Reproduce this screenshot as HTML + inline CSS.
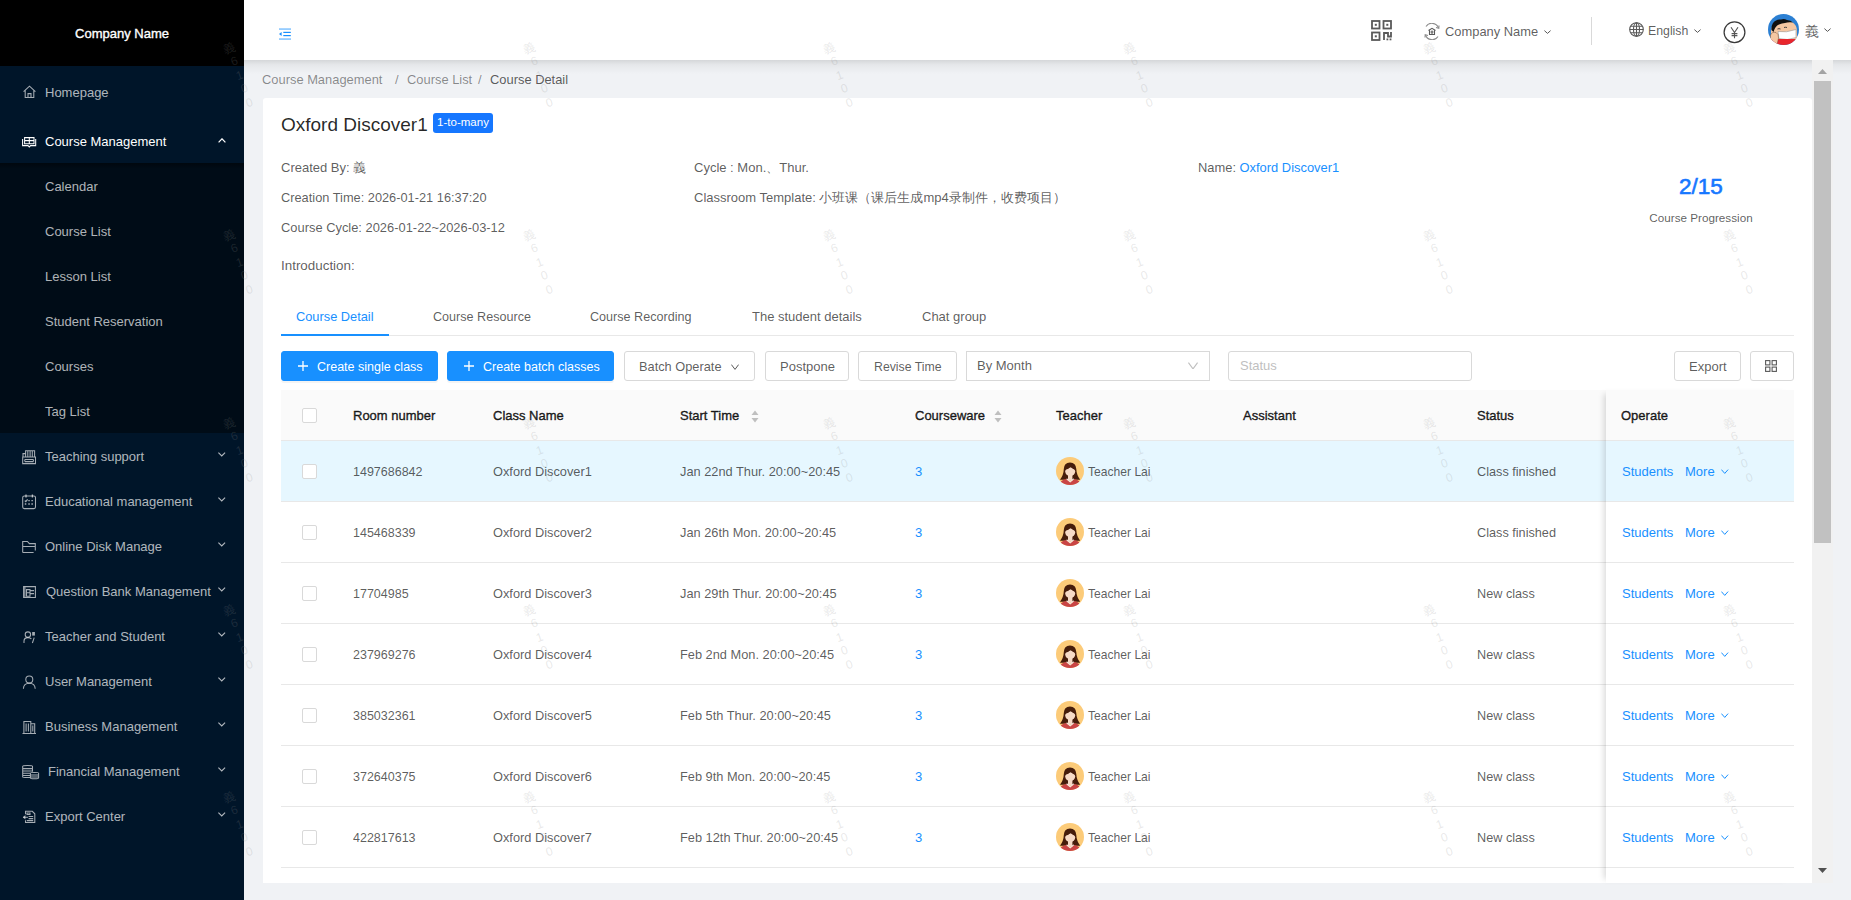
<!DOCTYPE html><html><head><meta charset="utf-8"><style>
*{box-sizing:border-box;margin:0;padding:0}
html,body{width:1851px;height:900px;overflow:hidden;background:#f0f2f5;font-family:"Liberation Sans",sans-serif;font-size:13px;color:rgba(0,0,0,.65)}
.t{position:absolute;white-space:nowrap;line-height:20px;height:20px}
.a{position:absolute}
#side{position:absolute;left:0;top:0;width:244px;height:900px;background:#001529}
#logo{position:absolute;left:0;top:0;width:244px;height:66px;background:#000}
#sub{position:absolute;left:0;top:163px;width:244px;height:270px;background:linear-gradient(rgba(0,0,0,.4),rgba(0,0,0,0) 6px),#000c17}
#hdr{position:absolute;left:244px;top:0;width:1607px;height:60px;background:#fff}
#hsh{position:absolute;left:244px;top:60px;width:1607px;height:14px;background:linear-gradient(rgba(0,0,0,.115),rgba(0,0,0,.045) 35%,rgba(0,0,0,0))}
#card{position:absolute;left:263px;top:98px;width:1549px;height:785px;background:#fff;border-radius:3px 3px 0 0}
.btn{position:absolute;height:30px;border:1px solid #d9d9d9;border-radius:3px;background:#fff}
.btnp{background:#1890ff;border-color:#1890ff;box-shadow:0 2px 0 rgba(0,0,0,.045)}
.cb{position:absolute;width:15px;height:15px;border:1px solid #d9d9d9;border-radius:2px;background:#fff}
.hl{position:absolute;height:1px;background:#e8e8e8}
</style></head><body>
<div id="side"><div id="logo"></div><div id="sub"></div></div>
<div class="t" style="left:0px;top:24px;color:#fff;width:244px;text-align:center;-webkit-text-stroke:.35px #fff;">Company Name</div>
<svg class="a" style="left:0;top:0" width="244" height="900" fill="none" stroke-width="1.05"><g stroke="rgba(255,255,255,.65)"><path d="M23.6 91.6 L29.5 86.2 L35.4 91.6 M25.2 90.2 V97.4 H33.8 V90.2 M28 97.4 V93.6 H31 V97.4"/></g><g stroke="#fff"><path d="M24.6 137.6 H34 V143.8 H24.6 Z M29.3 137.6 V143.8 M24.6 140.6 H34 M22.6 139 V145.6 H28 L29.3 146.9 L30.6 145.6 H35.7 V139"/></g><g stroke="rgba(255,255,255,.65)"><path d="M25.6 456.8 V450.7 H34.6 V456.8 M27.8 451 V456.5 M30.1 451 V456.5 M32.3 451 V456.5 M23 456.8 V453.6 H25.6 M22.7 457 H35.5 V463.6 H22.7 Z M24.8 459.4 H33.4 M24.8 461.6 H33.4 M24.8 459.4 V461.6 M33.4 459.4 V461.6"/></g><g stroke="rgba(255,255,255,.65)"><rect x="22.7" y="496" width="12.8" height="12.6" rx="1.6"/><path d="M26 494.6 V497.6 M32.4 494.6 V497.6 M24.8 500.6 L25.8 501.6 L27.6 499.4 M28.3 500.6 H29.8 M31.4 500.6 H32.9 M24.8 504 H26.3 M28.3 504 H29.8 M31.4 504 H32.9" stroke-width="1.3"/></g><g stroke="rgba(255,255,255,.65)"><path d="M22.7 552.5 V541.4 H27.4 L29.4 543.6 H35.3 V550.6 M22.7 552.5 H33.6 M22.7 546.5 H35.3"/></g><g stroke="rgba(255,255,255,.65)"><path d="M23.6 586.6 H35.4 V597.5 H23.6 Z M24.9 586.6 V597.5 M26.5 589.6 H30 V596.2 H26.5 Z M26.5 592.8 H30 M30 590.6 H34 M30 593.6 H34"/></g><g stroke="rgba(255,255,255,.65)"><circle cx="27.9" cy="634.6" r="2.7"/><path d="M24 643 V641.2 Q24 637.6 27.9 637.6 Q30.4 637.6 31.4 639 M34.2 637.6 L32.4 643"/><rect x="32.2" y="632" width="2.7" height="3.6" fill="rgba(255,255,255,.65)" stroke="none"/></g><g stroke="rgba(255,255,255,.65)"><circle cx="29.3" cy="679.4" r="3.5"/><path d="M23.4 688.8 Q23.6 683.2 29.3 683.2 Q35 683.2 35.2 688.8"/></g><g stroke="rgba(255,255,255,.65)"><path d="M23.9 733.4 V721.4 H30.8 V733.4 M30.8 723.8 H34.7 V733.4 M22.5 733.4 H36 M26.1 723.6 V731.4 M28.4 723.6 V731.4 M32.8 725.6 V731.4"/></g><g stroke="rgba(255,255,255,.65)"><path d="M22.7 766.2 Q22.7 765.4 27.6 765.4 Q32.5 765.4 32.5 766.2 V771.8 M22.7 766.2 V776.9 Q22.7 777.5 27 777.5 H30 M22.9 768.6 H32.3 M22.9 770.9 H32.3 M22.9 773.3 H30 M22.9 775.5 H30 M30.4 773.1 Q30.4 772.5 34.5 772.5 Q38.6 772.5 38.6 773.1 V778 Q38.6 778.7 34.5 778.7 Q30.4 778.7 30.4 778 Z M30.6 775 H38.4 M30.6 777 H38.4"/></g><g stroke="rgba(255,255,255,.65)"><path d="M25.5 814.2 V811.3 H32.3 L34.8 813.8 V822.5 H25.5 V820.2 M27 812.9 H30 V814.5 H27 Z M28.6 816.4 H33.2 M28.6 818.6 H33.2 M26.8 820.6 H33.2 M23.2 817.3 H28"/><path d="M22.8 817.3 L25.4 815.1 V819.5 Z" fill="rgba(255,255,255,.65)" stroke="none"/></g></svg>
<div class="t" style="left:45px;top:82.5px;color:rgba(255,255,255,.7);">Homepage</div>
<div class="t" style="left:45px;top:131.5px;color:#fff;">Course Management</div>
<svg class="a" style="left:218px;top:138.3px" width="8" height="5" viewBox="0 0 8 5"><path d="M0.6 4.4 L4.0 0.8 L7.4 4.4" fill="none" stroke="#fff" stroke-width="1.2"/></svg>
<div class="t" style="left:45px;top:177px;color:rgba(255,255,255,.7);">Calendar</div>
<div class="t" style="left:45px;top:222px;color:rgba(255,255,255,.7);">Course List</div>
<div class="t" style="left:45px;top:267px;color:rgba(255,255,255,.7);">Lesson List</div>
<div class="t" style="left:45px;top:312px;color:rgba(255,255,255,.7);">Student Reservation</div>
<div class="t" style="left:45px;top:357px;color:rgba(255,255,255,.7);">Courses</div>
<div class="t" style="left:45px;top:402px;color:rgba(255,255,255,.7);">Tag List</div>
<div class="t" style="left:45px;top:446.5px;color:rgba(255,255,255,.7);">Teaching support</div>
<svg class="a" style="left:218px;top:452.25px" width="7.5" height="4.5" viewBox="0 0 7.5 4.5"><path d="M0.4 0.6 L3.75 3.9 L7.1 0.6" fill="none" stroke="rgba(255,255,255,.7)" stroke-width="1.1"/></svg>
<div class="t" style="left:45px;top:491.5px;color:rgba(255,255,255,.7);">Educational management</div>
<svg class="a" style="left:218px;top:497.25px" width="7.5" height="4.5" viewBox="0 0 7.5 4.5"><path d="M0.4 0.6 L3.75 3.9 L7.1 0.6" fill="none" stroke="rgba(255,255,255,.7)" stroke-width="1.1"/></svg>
<div class="t" style="left:45px;top:536.5px;color:rgba(255,255,255,.7);">Online Disk Manage</div>
<svg class="a" style="left:218px;top:542.25px" width="7.5" height="4.5" viewBox="0 0 7.5 4.5"><path d="M0.4 0.6 L3.75 3.9 L7.1 0.6" fill="none" stroke="rgba(255,255,255,.7)" stroke-width="1.1"/></svg>
<div class="t" style="left:46px;top:581.5px;color:rgba(255,255,255,.7);">Question Bank Management</div>
<svg class="a" style="left:218px;top:587.25px" width="7.5" height="4.5" viewBox="0 0 7.5 4.5"><path d="M0.4 0.6 L3.75 3.9 L7.1 0.6" fill="none" stroke="rgba(255,255,255,.7)" stroke-width="1.1"/></svg>
<div class="t" style="left:45px;top:626.5px;color:rgba(255,255,255,.7);">Teacher and Student</div>
<svg class="a" style="left:218px;top:632.25px" width="7.5" height="4.5" viewBox="0 0 7.5 4.5"><path d="M0.4 0.6 L3.75 3.9 L7.1 0.6" fill="none" stroke="rgba(255,255,255,.7)" stroke-width="1.1"/></svg>
<div class="t" style="left:45px;top:671.5px;color:rgba(255,255,255,.7);">User Management</div>
<svg class="a" style="left:218px;top:677.25px" width="7.5" height="4.5" viewBox="0 0 7.5 4.5"><path d="M0.4 0.6 L3.75 3.9 L7.1 0.6" fill="none" stroke="rgba(255,255,255,.7)" stroke-width="1.1"/></svg>
<div class="t" style="left:45px;top:716.5px;color:rgba(255,255,255,.7);">Business Management</div>
<svg class="a" style="left:218px;top:722.25px" width="7.5" height="4.5" viewBox="0 0 7.5 4.5"><path d="M0.4 0.6 L3.75 3.9 L7.1 0.6" fill="none" stroke="rgba(255,255,255,.7)" stroke-width="1.1"/></svg>
<div class="t" style="left:48px;top:761.5px;color:rgba(255,255,255,.7);">Financial Management</div>
<svg class="a" style="left:218px;top:767.25px" width="7.5" height="4.5" viewBox="0 0 7.5 4.5"><path d="M0.4 0.6 L3.75 3.9 L7.1 0.6" fill="none" stroke="rgba(255,255,255,.7)" stroke-width="1.1"/></svg>
<div class="t" style="left:45px;top:806.5px;color:rgba(255,255,255,.7);">Export Center</div>
<svg class="a" style="left:218px;top:812.25px" width="7.5" height="4.5" viewBox="0 0 7.5 4.5"><path d="M0.4 0.6 L3.75 3.9 L7.1 0.6" fill="none" stroke="rgba(255,255,255,.7)" stroke-width="1.1"/></svg>
<div id="hdr"></div><div id="hsh"></div>
<svg class="a" style="left:279px;top:28px" width="12" height="12" viewBox="0 0 12 12" fill="#1890ff"><rect x="0" y="0.5" width="12" height="1.1" opacity=".75"/><rect x="4.3" y="3.8" width="7.5" height="1.2"/><rect x="4.3" y="7" width="7.5" height="1.2"/><rect x="0" y="10.5" width="12" height="1.1" opacity=".75"/><path d="M0 6 L2.6 3.9 V8.1 Z"/></svg>
<svg class="a" style="left:1371px;top:20px" width="21" height="21" viewBox="0 0 21 21" fill="none" stroke="#595959" stroke-width="1.8"><rect x="1" y="1" width="7.5" height="7.5"/><rect x="12.5" y="1" width="7.5" height="7.5"/><rect x="1" y="12.5" width="7.5" height="7.5"/><rect x="3.8" y="3.8" width="2" height="2" fill="#595959" stroke="none"/><rect x="15.3" y="3.8" width="2" height="2" fill="#595959" stroke="none"/><rect x="3.8" y="15.3" width="2" height="2" fill="#595959" stroke="none"/><path d="M13 12 V20 M13 13 H17 V16.5 H20 V12"/><rect x="15.5" y="18.5" width="1.8" height="1.8" fill="#595959" stroke="none"/><rect x="18.6" y="18.5" width="1.8" height="1.8" fill="#595959" stroke="none"/></svg>
<svg class="a" style="left:1423px;top:23px" width="18" height="17" viewBox="0 0 18 17" fill="none" stroke="#8c8c8c" stroke-width="1.1"><path d="M15.5 5 A7 7 0 0 0 3 3.5 M2.5 12 A7 7 0 0 0 15 13.5"/><path d="M13 4.5 L15.8 5.2 L16 2.5 M5 12.5 L2.2 11.8 L2 14.5"/><path d="M5.5 7.5 L9 5.3 L12.5 7.5 M6.5 7.5 V11.5 H11.5 V7.5 M7.5 9 H10.5 M9 7.5 V11.5" stroke="#595959"/></svg>
<div class="t" style="left:1445px;top:22px;font-size:12.9px;color:rgba(0,0,0,.65);">Company Name</div>
<svg class="a" style="left:1544px;top:29.5px" width="7" height="4" viewBox="0 0 7 4"><path d="M0.4 0.6 L3.5 3.4 L6.6 0.6" fill="none" stroke="#595959" stroke-width="1.0"/></svg>
<div class="a" style="left:1591px;top:17px;width:1px;height:28px;background:#d9d9d9"></div>
<svg class="a" style="left:1629px;top:22px" width="15" height="15" viewBox="0 0 15 15" fill="none" stroke="#595959" stroke-width="1.1"><circle cx="7.5" cy="7.5" r="6.8"/><ellipse cx="7.5" cy="7.5" rx="3" ry="6.8"/><path d="M0.7 7.5 H14.3 M1.6 4.2 H13.4 M1.6 10.8 H13.4 M7.5 0.7 V14.3"/></svg>
<div class="t" style="left:1648px;top:21px;font-size:12.3px;color:rgba(0,0,0,.65);">English</div>
<svg class="a" style="left:1694px;top:28.5px" width="7" height="4" viewBox="0 0 7 4"><path d="M0.4 0.6 L3.5 3.4 L6.6 0.6" fill="none" stroke="#595959" stroke-width="1.0"/></svg>
<svg class="a" style="left:1723px;top:21px" width="23" height="23" viewBox="0 0 23 23" fill="none"><circle cx="11.5" cy="11.2" r="10.4" stroke="#3a3a3a" stroke-width="1.25"/><path d="M8 6.2 L11.5 11.6 L15 6.2 M11.5 11.6 V17.2 M8.6 12.6 H14.4 M8.6 14.6 H14.4" stroke="#555" stroke-width="1.1"/></svg>
<svg class="a" style="left:1768px;top:14px" width="31" height="31" viewBox="0 0 31 31"><defs><clipPath id="av"><circle cx="15.5" cy="15.5" r="15.5"/></clipPath></defs><g clip-path="url(#av)"><rect width="31" height="31" fill="#2c80d3"/><path d="M3 17 Q4 9 10 7 Q17 5 24 8 Q29 11 29 17 L29 26 L3 26 Z" fill="#f5c7a2"/><path d="M3.5 16 Q3 9 8 6.5 Q10 5 13 5.5 Q16 4.5 19 6 Q23 6 25 8.5 Q20 8 17 9 Q14 9 11 10.5 Q7 12 5.5 18 Z" fill="#111"/><path d="M9.5 15 Q11 14.3 12.5 15 M16 13.5 Q17.5 13 19 13.5" stroke="#333" stroke-width=".9" fill="none"/><path d="M10 17.5 Q18 19 28 15.5 L28 23.5 Q19 27 11 24.5 Z" fill="#fff" stroke="#9a9a9a" stroke-width=".6"/><rect x="0" y="25" width="31" height="6" fill="#e8262c"/><path d="M2 31 L2.5 21 Q4 17.5 8 18.5 Q11 20 10.5 24 L9 31 Z" fill="#f5c7a2" stroke="#6b4a3a" stroke-width=".5"/></g></svg>
<div class="t" style="left:1805px;top:21px;font-size:14px;color:rgba(0,0,0,.65);">義</div>
<svg class="a" style="left:1824px;top:27.5px" width="7" height="4" viewBox="0 0 7 4"><path d="M0.4 0.6 L3.5 3.4 L6.6 0.6" fill="none" stroke="#595959" stroke-width="1.0"/></svg>
<div class="t" style="left:262px;top:70px;font-size:12.9px;color:rgba(0,0,0,.45);">Course Management</div>
<div class="t" style="left:395px;top:70px;color:rgba(0,0,0,.45);">/</div>
<div class="t" style="left:407px;top:70px;font-size:12.9px;color:rgba(0,0,0,.45);">Course List</div>
<div class="t" style="left:478px;top:70px;color:rgba(0,0,0,.45);">/</div>
<div class="t" style="left:490px;top:70px;font-size:12.9px;color:rgba(0,0,0,.65);">Course Detail</div>
<div id="card"></div>
<div class="t" style="left:281px;top:113px;font-size:19px;color:rgba(0,0,0,.85);line-height:24px;height:24px">Oxford Discover1</div>
<div class="a" style="left:433px;top:113px;width:60px;height:20px;background:#1677ff;border-radius:3px;color:#fff;font-size:11.5px;line-height:18px;text-align:center">1-to-many</div>
<div class="t" style="left:281px;top:157.5px;">Created By: 義</div>
<div class="t" style="left:281px;top:187.5px;font-size:12.8px;">Creation Time: 2026-01-21 16:37:20</div>
<div class="t" style="left:281px;top:217.5px;font-size:12.9px;">Course Cycle: 2026-01-22~2026-03-12</div>
<div class="t" style="left:281px;top:255.5px;font-size:13.4px;">Introduction:</div>
<div class="t" style="left:694px;top:157.5px;">Cycle : Mon.、Thur.</div>
<div class="t" style="left:694px;top:187.5px;">Classroom Template: 小班课（课后生成mp4录制件，收费项目）</div>
<div class="t" style="left:1198px;top:157.5px;font-size:12.9px;">Name: <span style="color:#1890ff">Oxford Discover1</span></div>
<div class="t" style="left:1600px;top:174.5px;width:202px;text-align:center;font-size:22.5px;-webkit-text-stroke:.6px #1677ff;color:#1677ff;line-height:24px;height:24px">2/15</div>
<div class="t" style="left:1600px;top:208px;width:202px;text-align:center;font-size:11.7px;color:rgba(0,0,0,.65)">Course Progression</div>
<div class="hl" style="left:281px;top:335px;width:1513px"></div>
<div class="a" style="left:281px;top:334px;width:108px;height:2px;background:#1890ff"></div>
<div class="t" style="left:296px;top:307px;font-size:12.8px;color:#1890ff;">Course Detail</div>
<div class="t" style="left:433px;top:307px;font-size:12.6px;">Course Resource</div>
<div class="t" style="left:590px;top:307px;font-size:12.6px;">Course Recording</div>
<div class="t" style="left:752px;top:307px;">The student details</div>
<div class="t" style="left:922px;top:307px;">Chat group</div>
<div class="btn btnp" style="left:281px;top:351px;width:157px"></div>
<svg class="a" style="left:298px;top:361px" width="10" height="10" viewBox="0 0 10 10"><path d="M5 0 V10 M0 5 H10" stroke="#fff" stroke-width="1.3"/></svg>
<div class="t" style="left:317px;top:356.5px;font-size:12.5px;color:#fff;">Create single class</div>
<div class="btn btnp" style="left:447px;top:351px;width:167px"></div>
<svg class="a" style="left:464px;top:361px" width="10" height="10" viewBox="0 0 10 10"><path d="M5 0 V10 M0 5 H10" stroke="#fff" stroke-width="1.3"/></svg>
<div class="t" style="left:483px;top:356.5px;font-size:12.5px;color:#fff;">Create batch classes</div>
<div class="btn" style="left:624px;top:351px;width:131px"></div>
<div class="t" style="left:639px;top:356.5px;font-size:12.8px;">Batch Operate</div>
<svg class="a" style="left:731px;top:363.5px" width="8" height="6" viewBox="0 0 8 6"><path d="M0.4 0.6 L4.0 5.4 L7.6 0.6" fill="none" stroke="#595959" stroke-width="1.0"/></svg>
<div class="btn" style="left:765px;top:351px;width:84px"></div>
<div class="t" style="left:780px;top:356.5px;">Postpone</div>
<div class="btn" style="left:858px;top:351px;width:99px"></div>
<div class="t" style="left:874px;top:356.5px;font-size:12.3px;">Revise Time</div>
<div class="btn" style="left:966px;top:351px;width:244px;border-radius:0"></div>
<div class="t" style="left:977px;top:356px;">By Month</div>
<svg class="a" style="left:1187.5px;top:361.75px" width="10" height="7.5" viewBox="0 0 10 7.5"><path d="M0.4 0.6 L5.0 6.9 L9.6 0.6" fill="none" stroke="#bfbfbf" stroke-width="1.1"/></svg>
<div class="btn" style="left:1228px;top:351px;width:244px;border-radius:3px"></div>
<div class="t" style="left:1240px;top:356px;color:#bfbfbf;">Status</div>
<div class="btn" style="left:1674px;top:351px;width:67px"></div>
<div class="t" style="left:1689px;top:356.5px;">Export</div>
<div class="btn" style="left:1750px;top:351px;width:44px"></div>
<svg class="a" style="left:1765px;top:360px" width="12" height="12" viewBox="0 0 12 12" fill="none" stroke="#595959" stroke-width="1.1"><rect x=".6" y=".6" width="4.3" height="4.3"/><rect x="7.1" y=".6" width="4.3" height="4.3"/><rect x=".6" y="7.1" width="4.3" height="4.3"/><rect x="7.1" y="7.1" width="4.3" height="4.3"/></svg>
<div class="a" style="left:281px;top:390px;width:1513px;height:51px;background:#fafafa;border-bottom:1px solid #e8e8e8"></div>
<div class="cb" style="left:302px;top:408px"></div>
<div class="t" style="left:353px;top:405.5px;color:rgba(0,0,0,.85);-webkit-text-stroke:.4px rgba(0,0,0,.85);">Room number</div>
<div class="t" style="left:493px;top:405.5px;color:rgba(0,0,0,.85);-webkit-text-stroke:.4px rgba(0,0,0,.85);">Class Name</div>
<div class="t" style="left:680px;top:405.5px;color:rgba(0,0,0,.85);-webkit-text-stroke:.4px rgba(0,0,0,.85);">Start Time</div>
<svg class="a" style="left:751px;top:409.5px" width="8" height="13" viewBox="0 0 8 13" fill="#bfbfbf"><path d="M4 0.5 L7.5 5 H0.5 Z M4 12.5 L7.5 8 H0.5 Z"/></svg>
<div class="t" style="left:915px;top:405.5px;color:rgba(0,0,0,.85);-webkit-text-stroke:.4px rgba(0,0,0,.85);">Courseware</div>
<svg class="a" style="left:994px;top:409.5px" width="8" height="13" viewBox="0 0 8 13" fill="#bfbfbf"><path d="M4 0.5 L7.5 5 H0.5 Z M4 12.5 L7.5 8 H0.5 Z"/></svg>
<div class="t" style="left:1056px;top:405.5px;color:rgba(0,0,0,.85);-webkit-text-stroke:.4px rgba(0,0,0,.85);">Teacher</div>
<div class="t" style="left:1243px;top:405.5px;color:rgba(0,0,0,.85);-webkit-text-stroke:.4px rgba(0,0,0,.85);">Assistant</div>
<div class="t" style="left:1477px;top:405.5px;color:rgba(0,0,0,.85);-webkit-text-stroke:.4px rgba(0,0,0,.85);">Status</div>
<div class="a" style="left:281px;top:441px;width:1513px;height:61px;background:#e6f7ff;border-bottom:1px solid #e8e8e8"></div>
<div class="cb" style="left:302px;top:464px"></div>
<div class="t" style="left:353px;top:461.5px;font-size:12.5px;">1497686842</div>
<div class="t" style="left:493px;top:461.5px;font-size:12.8px;">Oxford Discover1</div>
<div class="t" style="left:680px;top:461.5px;font-size:12.8px;">Jan 22nd Thur. 20:00~20:45</div>
<div class="t" style="left:915px;top:461.5px;color:#1890ff;">3</div>
<svg class="a" style="left:1056px;top:457px" width="28" height="28" viewBox="0 0 28 28"><defs><clipPath id="tc0"><circle cx="14" cy="14" r="14"/></clipPath></defs><circle cx="14" cy="14" r="14" fill="#fccb79"/><g clip-path="url(#tc0)"><path d="M14 5.4 Q8 5.6 7.8 12 Q7.6 18 4 22.8 L24.2 22.8 Q20.6 18 20.3 12 Q20 5.6 14 5.4 Z" fill="#461d0b"/><ellipse cx="14.2" cy="14.6" rx="5" ry="4.4" fill="#f6dac6"/><rect x="12" y="17" width="4.4" height="6" fill="#f6dac6"/><path d="M8.8 13 Q9 7.6 14 7.6 Q19.2 7.6 19.5 13 Q16.5 11.8 14.6 10 Q13 12 8.8 13 Z" fill="#461d0b"/><path d="M2.5 30 Q3.5 23.2 10 22 L14.2 25.2 L18.4 22 Q24.8 23.2 25.8 30 Z" fill="#c94545"/><path d="M10 22 L14.2 25.4 L18.4 22 L17.2 21.6 L14.2 23.8 L11.2 21.6 Z" fill="#f3e0d8"/></g></svg>
<div class="t" style="left:1088px;top:461.5px;font-size:12.1px;">Teacher Lai</div>
<div class="t" style="left:1477px;top:461.5px;font-size:12.7px;">Class finished</div>
<div class="a" style="left:281px;top:502px;width:1513px;height:61px;background:#fff;border-bottom:1px solid #e8e8e8"></div>
<div class="cb" style="left:302px;top:525px"></div>
<div class="t" style="left:353px;top:522.5px;font-size:12.5px;">145468339</div>
<div class="t" style="left:493px;top:522.5px;font-size:12.8px;">Oxford Discover2</div>
<div class="t" style="left:680px;top:522.5px;font-size:12.8px;">Jan 26th Mon. 20:00~20:45</div>
<div class="t" style="left:915px;top:522.5px;color:#1890ff;">3</div>
<svg class="a" style="left:1056px;top:518px" width="28" height="28" viewBox="0 0 28 28"><defs><clipPath id="tc1"><circle cx="14" cy="14" r="14"/></clipPath></defs><circle cx="14" cy="14" r="14" fill="#fccb79"/><g clip-path="url(#tc1)"><path d="M14 5.4 Q8 5.6 7.8 12 Q7.6 18 4 22.8 L24.2 22.8 Q20.6 18 20.3 12 Q20 5.6 14 5.4 Z" fill="#461d0b"/><ellipse cx="14.2" cy="14.6" rx="5" ry="4.4" fill="#f6dac6"/><rect x="12" y="17" width="4.4" height="6" fill="#f6dac6"/><path d="M8.8 13 Q9 7.6 14 7.6 Q19.2 7.6 19.5 13 Q16.5 11.8 14.6 10 Q13 12 8.8 13 Z" fill="#461d0b"/><path d="M2.5 30 Q3.5 23.2 10 22 L14.2 25.2 L18.4 22 Q24.8 23.2 25.8 30 Z" fill="#c94545"/><path d="M10 22 L14.2 25.4 L18.4 22 L17.2 21.6 L14.2 23.8 L11.2 21.6 Z" fill="#f3e0d8"/></g></svg>
<div class="t" style="left:1088px;top:522.5px;font-size:12.1px;">Teacher Lai</div>
<div class="t" style="left:1477px;top:522.5px;font-size:12.7px;">Class finished</div>
<div class="a" style="left:281px;top:563px;width:1513px;height:61px;background:#fff;border-bottom:1px solid #e8e8e8"></div>
<div class="cb" style="left:302px;top:586px"></div>
<div class="t" style="left:353px;top:583.5px;font-size:12.5px;">17704985</div>
<div class="t" style="left:493px;top:583.5px;font-size:12.8px;">Oxford Discover3</div>
<div class="t" style="left:680px;top:583.5px;font-size:12.8px;">Jan 29th Thur. 20:00~20:45</div>
<div class="t" style="left:915px;top:583.5px;color:#1890ff;">3</div>
<svg class="a" style="left:1056px;top:579px" width="28" height="28" viewBox="0 0 28 28"><defs><clipPath id="tc2"><circle cx="14" cy="14" r="14"/></clipPath></defs><circle cx="14" cy="14" r="14" fill="#fccb79"/><g clip-path="url(#tc2)"><path d="M14 5.4 Q8 5.6 7.8 12 Q7.6 18 4 22.8 L24.2 22.8 Q20.6 18 20.3 12 Q20 5.6 14 5.4 Z" fill="#461d0b"/><ellipse cx="14.2" cy="14.6" rx="5" ry="4.4" fill="#f6dac6"/><rect x="12" y="17" width="4.4" height="6" fill="#f6dac6"/><path d="M8.8 13 Q9 7.6 14 7.6 Q19.2 7.6 19.5 13 Q16.5 11.8 14.6 10 Q13 12 8.8 13 Z" fill="#461d0b"/><path d="M2.5 30 Q3.5 23.2 10 22 L14.2 25.2 L18.4 22 Q24.8 23.2 25.8 30 Z" fill="#c94545"/><path d="M10 22 L14.2 25.4 L18.4 22 L17.2 21.6 L14.2 23.8 L11.2 21.6 Z" fill="#f3e0d8"/></g></svg>
<div class="t" style="left:1088px;top:583.5px;font-size:12.1px;">Teacher Lai</div>
<div class="t" style="left:1477px;top:583.5px;font-size:12.7px;">New class</div>
<div class="a" style="left:281px;top:624px;width:1513px;height:61px;background:#fff;border-bottom:1px solid #e8e8e8"></div>
<div class="cb" style="left:302px;top:647px"></div>
<div class="t" style="left:353px;top:644.5px;font-size:12.5px;">237969276</div>
<div class="t" style="left:493px;top:644.5px;font-size:12.8px;">Oxford Discover4</div>
<div class="t" style="left:680px;top:644.5px;font-size:12.8px;">Feb 2nd Mon. 20:00~20:45</div>
<div class="t" style="left:915px;top:644.5px;color:#1890ff;">3</div>
<svg class="a" style="left:1056px;top:640px" width="28" height="28" viewBox="0 0 28 28"><defs><clipPath id="tc3"><circle cx="14" cy="14" r="14"/></clipPath></defs><circle cx="14" cy="14" r="14" fill="#fccb79"/><g clip-path="url(#tc3)"><path d="M14 5.4 Q8 5.6 7.8 12 Q7.6 18 4 22.8 L24.2 22.8 Q20.6 18 20.3 12 Q20 5.6 14 5.4 Z" fill="#461d0b"/><ellipse cx="14.2" cy="14.6" rx="5" ry="4.4" fill="#f6dac6"/><rect x="12" y="17" width="4.4" height="6" fill="#f6dac6"/><path d="M8.8 13 Q9 7.6 14 7.6 Q19.2 7.6 19.5 13 Q16.5 11.8 14.6 10 Q13 12 8.8 13 Z" fill="#461d0b"/><path d="M2.5 30 Q3.5 23.2 10 22 L14.2 25.2 L18.4 22 Q24.8 23.2 25.8 30 Z" fill="#c94545"/><path d="M10 22 L14.2 25.4 L18.4 22 L17.2 21.6 L14.2 23.8 L11.2 21.6 Z" fill="#f3e0d8"/></g></svg>
<div class="t" style="left:1088px;top:644.5px;font-size:12.1px;">Teacher Lai</div>
<div class="t" style="left:1477px;top:644.5px;font-size:12.7px;">New class</div>
<div class="a" style="left:281px;top:685px;width:1513px;height:61px;background:#fff;border-bottom:1px solid #e8e8e8"></div>
<div class="cb" style="left:302px;top:708px"></div>
<div class="t" style="left:353px;top:705.5px;font-size:12.5px;">385032361</div>
<div class="t" style="left:493px;top:705.5px;font-size:12.8px;">Oxford Discover5</div>
<div class="t" style="left:680px;top:705.5px;font-size:12.8px;">Feb 5th Thur. 20:00~20:45</div>
<div class="t" style="left:915px;top:705.5px;color:#1890ff;">3</div>
<svg class="a" style="left:1056px;top:701px" width="28" height="28" viewBox="0 0 28 28"><defs><clipPath id="tc4"><circle cx="14" cy="14" r="14"/></clipPath></defs><circle cx="14" cy="14" r="14" fill="#fccb79"/><g clip-path="url(#tc4)"><path d="M14 5.4 Q8 5.6 7.8 12 Q7.6 18 4 22.8 L24.2 22.8 Q20.6 18 20.3 12 Q20 5.6 14 5.4 Z" fill="#461d0b"/><ellipse cx="14.2" cy="14.6" rx="5" ry="4.4" fill="#f6dac6"/><rect x="12" y="17" width="4.4" height="6" fill="#f6dac6"/><path d="M8.8 13 Q9 7.6 14 7.6 Q19.2 7.6 19.5 13 Q16.5 11.8 14.6 10 Q13 12 8.8 13 Z" fill="#461d0b"/><path d="M2.5 30 Q3.5 23.2 10 22 L14.2 25.2 L18.4 22 Q24.8 23.2 25.8 30 Z" fill="#c94545"/><path d="M10 22 L14.2 25.4 L18.4 22 L17.2 21.6 L14.2 23.8 L11.2 21.6 Z" fill="#f3e0d8"/></g></svg>
<div class="t" style="left:1088px;top:705.5px;font-size:12.1px;">Teacher Lai</div>
<div class="t" style="left:1477px;top:705.5px;font-size:12.7px;">New class</div>
<div class="a" style="left:281px;top:746px;width:1513px;height:61px;background:#fff;border-bottom:1px solid #e8e8e8"></div>
<div class="cb" style="left:302px;top:769px"></div>
<div class="t" style="left:353px;top:766.5px;font-size:12.5px;">372640375</div>
<div class="t" style="left:493px;top:766.5px;font-size:12.8px;">Oxford Discover6</div>
<div class="t" style="left:680px;top:766.5px;font-size:12.8px;">Feb 9th Mon. 20:00~20:45</div>
<div class="t" style="left:915px;top:766.5px;color:#1890ff;">3</div>
<svg class="a" style="left:1056px;top:762px" width="28" height="28" viewBox="0 0 28 28"><defs><clipPath id="tc5"><circle cx="14" cy="14" r="14"/></clipPath></defs><circle cx="14" cy="14" r="14" fill="#fccb79"/><g clip-path="url(#tc5)"><path d="M14 5.4 Q8 5.6 7.8 12 Q7.6 18 4 22.8 L24.2 22.8 Q20.6 18 20.3 12 Q20 5.6 14 5.4 Z" fill="#461d0b"/><ellipse cx="14.2" cy="14.6" rx="5" ry="4.4" fill="#f6dac6"/><rect x="12" y="17" width="4.4" height="6" fill="#f6dac6"/><path d="M8.8 13 Q9 7.6 14 7.6 Q19.2 7.6 19.5 13 Q16.5 11.8 14.6 10 Q13 12 8.8 13 Z" fill="#461d0b"/><path d="M2.5 30 Q3.5 23.2 10 22 L14.2 25.2 L18.4 22 Q24.8 23.2 25.8 30 Z" fill="#c94545"/><path d="M10 22 L14.2 25.4 L18.4 22 L17.2 21.6 L14.2 23.8 L11.2 21.6 Z" fill="#f3e0d8"/></g></svg>
<div class="t" style="left:1088px;top:766.5px;font-size:12.1px;">Teacher Lai</div>
<div class="t" style="left:1477px;top:766.5px;font-size:12.7px;">New class</div>
<div class="a" style="left:281px;top:807px;width:1513px;height:61px;background:#fff;border-bottom:1px solid #e8e8e8"></div>
<div class="cb" style="left:302px;top:830px"></div>
<div class="t" style="left:353px;top:827.5px;font-size:12.5px;">422817613</div>
<div class="t" style="left:493px;top:827.5px;font-size:12.8px;">Oxford Discover7</div>
<div class="t" style="left:680px;top:827.5px;font-size:12.8px;">Feb 12th Thur. 20:00~20:45</div>
<div class="t" style="left:915px;top:827.5px;color:#1890ff;">3</div>
<svg class="a" style="left:1056px;top:823px" width="28" height="28" viewBox="0 0 28 28"><defs><clipPath id="tc6"><circle cx="14" cy="14" r="14"/></clipPath></defs><circle cx="14" cy="14" r="14" fill="#fccb79"/><g clip-path="url(#tc6)"><path d="M14 5.4 Q8 5.6 7.8 12 Q7.6 18 4 22.8 L24.2 22.8 Q20.6 18 20.3 12 Q20 5.6 14 5.4 Z" fill="#461d0b"/><ellipse cx="14.2" cy="14.6" rx="5" ry="4.4" fill="#f6dac6"/><rect x="12" y="17" width="4.4" height="6" fill="#f6dac6"/><path d="M8.8 13 Q9 7.6 14 7.6 Q19.2 7.6 19.5 13 Q16.5 11.8 14.6 10 Q13 12 8.8 13 Z" fill="#461d0b"/><path d="M2.5 30 Q3.5 23.2 10 22 L14.2 25.2 L18.4 22 Q24.8 23.2 25.8 30 Z" fill="#c94545"/><path d="M10 22 L14.2 25.4 L18.4 22 L17.2 21.6 L14.2 23.8 L11.2 21.6 Z" fill="#f3e0d8"/></g></svg>
<div class="t" style="left:1088px;top:827.5px;font-size:12.1px;">Teacher Lai</div>
<div class="t" style="left:1477px;top:827.5px;font-size:12.7px;">New class</div>
<div class="a" style="left:1606px;top:390px;width:188px;height:493px;box-shadow:-6px 0 6px -4px rgba(0,0,0,.15)"></div>
<div class="a" style="left:1606px;top:390px;width:188px;height:51px;background:#fafafa;border-bottom:1px solid #e8e8e8"></div>
<div class="t" style="left:1621px;top:405.5px;color:rgba(0,0,0,.85);-webkit-text-stroke:.4px rgba(0,0,0,.85);">Operate</div>
<div class="a" style="left:1606px;top:441px;width:188px;height:61px;background:#e6f7ff;border-bottom:1px solid #e8e8e8"></div>
<div class="t" style="left:1622px;top:461.5px;color:#1890ff;">Students</div>
<div class="t" style="left:1685px;top:461.5px;color:#1890ff;">More</div>
<svg class="a" style="left:1721px;top:469.0px" width="7.5" height="5" viewBox="0 0 7.5 5"><path d="M0.4 0.6 L3.75 4.4 L7.1 0.6" fill="none" stroke="#1890ff" stroke-width="1.0"/></svg>
<div class="a" style="left:1606px;top:502px;width:188px;height:61px;background:#fff;border-bottom:1px solid #e8e8e8"></div>
<div class="t" style="left:1622px;top:522.5px;color:#1890ff;">Students</div>
<div class="t" style="left:1685px;top:522.5px;color:#1890ff;">More</div>
<svg class="a" style="left:1721px;top:530.0px" width="7.5" height="5" viewBox="0 0 7.5 5"><path d="M0.4 0.6 L3.75 4.4 L7.1 0.6" fill="none" stroke="#1890ff" stroke-width="1.0"/></svg>
<div class="a" style="left:1606px;top:563px;width:188px;height:61px;background:#fff;border-bottom:1px solid #e8e8e8"></div>
<div class="t" style="left:1622px;top:583.5px;color:#1890ff;">Students</div>
<div class="t" style="left:1685px;top:583.5px;color:#1890ff;">More</div>
<svg class="a" style="left:1721px;top:591.0px" width="7.5" height="5" viewBox="0 0 7.5 5"><path d="M0.4 0.6 L3.75 4.4 L7.1 0.6" fill="none" stroke="#1890ff" stroke-width="1.0"/></svg>
<div class="a" style="left:1606px;top:624px;width:188px;height:61px;background:#fff;border-bottom:1px solid #e8e8e8"></div>
<div class="t" style="left:1622px;top:644.5px;color:#1890ff;">Students</div>
<div class="t" style="left:1685px;top:644.5px;color:#1890ff;">More</div>
<svg class="a" style="left:1721px;top:652.0px" width="7.5" height="5" viewBox="0 0 7.5 5"><path d="M0.4 0.6 L3.75 4.4 L7.1 0.6" fill="none" stroke="#1890ff" stroke-width="1.0"/></svg>
<div class="a" style="left:1606px;top:685px;width:188px;height:61px;background:#fff;border-bottom:1px solid #e8e8e8"></div>
<div class="t" style="left:1622px;top:705.5px;color:#1890ff;">Students</div>
<div class="t" style="left:1685px;top:705.5px;color:#1890ff;">More</div>
<svg class="a" style="left:1721px;top:713.0px" width="7.5" height="5" viewBox="0 0 7.5 5"><path d="M0.4 0.6 L3.75 4.4 L7.1 0.6" fill="none" stroke="#1890ff" stroke-width="1.0"/></svg>
<div class="a" style="left:1606px;top:746px;width:188px;height:61px;background:#fff;border-bottom:1px solid #e8e8e8"></div>
<div class="t" style="left:1622px;top:766.5px;color:#1890ff;">Students</div>
<div class="t" style="left:1685px;top:766.5px;color:#1890ff;">More</div>
<svg class="a" style="left:1721px;top:774.0px" width="7.5" height="5" viewBox="0 0 7.5 5"><path d="M0.4 0.6 L3.75 4.4 L7.1 0.6" fill="none" stroke="#1890ff" stroke-width="1.0"/></svg>
<div class="a" style="left:1606px;top:807px;width:188px;height:61px;background:#fff;border-bottom:1px solid #e8e8e8"></div>
<div class="t" style="left:1622px;top:827.5px;color:#1890ff;">Students</div>
<div class="t" style="left:1685px;top:827.5px;color:#1890ff;">More</div>
<svg class="a" style="left:1721px;top:835.0px" width="7.5" height="5" viewBox="0 0 7.5 5"><path d="M0.4 0.6 L3.75 4.4 L7.1 0.6" fill="none" stroke="#1890ff" stroke-width="1.0"/></svg>
<div class="a" style="left:1606px;top:868px;width:188px;height:15px;background:#fff"></div>
<div class="a" style="left:1812px;top:60px;width:21px;height:823px;background:#f1f1f1"></div>
<div class="a" style="left:1814px;top:81px;width:17px;height:462px;background:#c1c1c1"></div>
<svg class="a" style="left:1817px;top:68px" width="11" height="7" viewBox="0 0 11 7"><path d="M5.5 1 L10 6 H1 Z" fill="#a3a3a3"/></svg>
<svg class="a" style="left:1817px;top:867px" width="11" height="7" viewBox="0 0 11 7"><path d="M5.5 6 L10 1 H1 Z" fill="#505050"/></svg>
<div class="a" style="left:222.3px;top:41.0px;width:15px;font-size:12px;line-height:14.4px;text-align:center;color:rgba(140,140,140,.2);transform:rotate(-20deg);transform-origin:7.5px 7px;pointer-events:none"><div>義</div><div>6</div><div>1</div><div>0</div><div>0</div></div>
<div class="a" style="left:522.3px;top:41.0px;width:15px;font-size:12px;line-height:14.4px;text-align:center;color:rgba(140,140,140,.2);transform:rotate(-20deg);transform-origin:7.5px 7px;pointer-events:none"><div>義</div><div>6</div><div>1</div><div>0</div><div>0</div></div>
<div class="a" style="left:822.3px;top:41.0px;width:15px;font-size:12px;line-height:14.4px;text-align:center;color:rgba(140,140,140,.2);transform:rotate(-20deg);transform-origin:7.5px 7px;pointer-events:none"><div>義</div><div>6</div><div>1</div><div>0</div><div>0</div></div>
<div class="a" style="left:1122.3px;top:41.0px;width:15px;font-size:12px;line-height:14.4px;text-align:center;color:rgba(140,140,140,.2);transform:rotate(-20deg);transform-origin:7.5px 7px;pointer-events:none"><div>義</div><div>6</div><div>1</div><div>0</div><div>0</div></div>
<div class="a" style="left:1422.3px;top:41.0px;width:15px;font-size:12px;line-height:14.4px;text-align:center;color:rgba(140,140,140,.2);transform:rotate(-20deg);transform-origin:7.5px 7px;pointer-events:none"><div>義</div><div>6</div><div>1</div><div>0</div><div>0</div></div>
<div class="a" style="left:1722.3px;top:41.0px;width:15px;font-size:12px;line-height:14.4px;text-align:center;color:rgba(140,140,140,.2);transform:rotate(-20deg);transform-origin:7.5px 7px;pointer-events:none"><div>義</div><div>6</div><div>1</div><div>0</div><div>0</div></div>
<div class="a" style="left:222.3px;top:228.3px;width:15px;font-size:12px;line-height:14.4px;text-align:center;color:rgba(140,140,140,.2);transform:rotate(-20deg);transform-origin:7.5px 7px;pointer-events:none"><div>義</div><div>6</div><div>1</div><div>0</div><div>0</div></div>
<div class="a" style="left:522.3px;top:228.3px;width:15px;font-size:12px;line-height:14.4px;text-align:center;color:rgba(140,140,140,.2);transform:rotate(-20deg);transform-origin:7.5px 7px;pointer-events:none"><div>義</div><div>6</div><div>1</div><div>0</div><div>0</div></div>
<div class="a" style="left:822.3px;top:228.3px;width:15px;font-size:12px;line-height:14.4px;text-align:center;color:rgba(140,140,140,.2);transform:rotate(-20deg);transform-origin:7.5px 7px;pointer-events:none"><div>義</div><div>6</div><div>1</div><div>0</div><div>0</div></div>
<div class="a" style="left:1122.3px;top:228.3px;width:15px;font-size:12px;line-height:14.4px;text-align:center;color:rgba(140,140,140,.2);transform:rotate(-20deg);transform-origin:7.5px 7px;pointer-events:none"><div>義</div><div>6</div><div>1</div><div>0</div><div>0</div></div>
<div class="a" style="left:1422.3px;top:228.3px;width:15px;font-size:12px;line-height:14.4px;text-align:center;color:rgba(140,140,140,.2);transform:rotate(-20deg);transform-origin:7.5px 7px;pointer-events:none"><div>義</div><div>6</div><div>1</div><div>0</div><div>0</div></div>
<div class="a" style="left:1722.3px;top:228.3px;width:15px;font-size:12px;line-height:14.4px;text-align:center;color:rgba(140,140,140,.2);transform:rotate(-20deg);transform-origin:7.5px 7px;pointer-events:none"><div>義</div><div>6</div><div>1</div><div>0</div><div>0</div></div>
<div class="a" style="left:222.3px;top:415.6px;width:15px;font-size:12px;line-height:14.4px;text-align:center;color:rgba(140,140,140,.2);transform:rotate(-20deg);transform-origin:7.5px 7px;pointer-events:none"><div>義</div><div>6</div><div>1</div><div>0</div><div>0</div></div>
<div class="a" style="left:522.3px;top:415.6px;width:15px;font-size:12px;line-height:14.4px;text-align:center;color:rgba(140,140,140,.2);transform:rotate(-20deg);transform-origin:7.5px 7px;pointer-events:none"><div>義</div><div>6</div><div>1</div><div>0</div><div>0</div></div>
<div class="a" style="left:822.3px;top:415.6px;width:15px;font-size:12px;line-height:14.4px;text-align:center;color:rgba(140,140,140,.2);transform:rotate(-20deg);transform-origin:7.5px 7px;pointer-events:none"><div>義</div><div>6</div><div>1</div><div>0</div><div>0</div></div>
<div class="a" style="left:1122.3px;top:415.6px;width:15px;font-size:12px;line-height:14.4px;text-align:center;color:rgba(140,140,140,.2);transform:rotate(-20deg);transform-origin:7.5px 7px;pointer-events:none"><div>義</div><div>6</div><div>1</div><div>0</div><div>0</div></div>
<div class="a" style="left:1422.3px;top:415.6px;width:15px;font-size:12px;line-height:14.4px;text-align:center;color:rgba(140,140,140,.2);transform:rotate(-20deg);transform-origin:7.5px 7px;pointer-events:none"><div>義</div><div>6</div><div>1</div><div>0</div><div>0</div></div>
<div class="a" style="left:1722.3px;top:415.6px;width:15px;font-size:12px;line-height:14.4px;text-align:center;color:rgba(140,140,140,.2);transform:rotate(-20deg);transform-origin:7.5px 7px;pointer-events:none"><div>義</div><div>6</div><div>1</div><div>0</div><div>0</div></div>
<div class="a" style="left:222.3px;top:602.9000000000001px;width:15px;font-size:12px;line-height:14.4px;text-align:center;color:rgba(140,140,140,.2);transform:rotate(-20deg);transform-origin:7.5px 7px;pointer-events:none"><div>義</div><div>6</div><div>1</div><div>0</div><div>0</div></div>
<div class="a" style="left:522.3px;top:602.9000000000001px;width:15px;font-size:12px;line-height:14.4px;text-align:center;color:rgba(140,140,140,.2);transform:rotate(-20deg);transform-origin:7.5px 7px;pointer-events:none"><div>義</div><div>6</div><div>1</div><div>0</div><div>0</div></div>
<div class="a" style="left:822.3px;top:602.9000000000001px;width:15px;font-size:12px;line-height:14.4px;text-align:center;color:rgba(140,140,140,.2);transform:rotate(-20deg);transform-origin:7.5px 7px;pointer-events:none"><div>義</div><div>6</div><div>1</div><div>0</div><div>0</div></div>
<div class="a" style="left:1122.3px;top:602.9000000000001px;width:15px;font-size:12px;line-height:14.4px;text-align:center;color:rgba(140,140,140,.2);transform:rotate(-20deg);transform-origin:7.5px 7px;pointer-events:none"><div>義</div><div>6</div><div>1</div><div>0</div><div>0</div></div>
<div class="a" style="left:1422.3px;top:602.9000000000001px;width:15px;font-size:12px;line-height:14.4px;text-align:center;color:rgba(140,140,140,.2);transform:rotate(-20deg);transform-origin:7.5px 7px;pointer-events:none"><div>義</div><div>6</div><div>1</div><div>0</div><div>0</div></div>
<div class="a" style="left:1722.3px;top:602.9000000000001px;width:15px;font-size:12px;line-height:14.4px;text-align:center;color:rgba(140,140,140,.2);transform:rotate(-20deg);transform-origin:7.5px 7px;pointer-events:none"><div>義</div><div>6</div><div>1</div><div>0</div><div>0</div></div>
<div class="a" style="left:222.3px;top:790.2px;width:15px;font-size:12px;line-height:14.4px;text-align:center;color:rgba(140,140,140,.2);transform:rotate(-20deg);transform-origin:7.5px 7px;pointer-events:none"><div>義</div><div>6</div><div>1</div><div>0</div><div>0</div></div>
<div class="a" style="left:522.3px;top:790.2px;width:15px;font-size:12px;line-height:14.4px;text-align:center;color:rgba(140,140,140,.2);transform:rotate(-20deg);transform-origin:7.5px 7px;pointer-events:none"><div>義</div><div>6</div><div>1</div><div>0</div><div>0</div></div>
<div class="a" style="left:822.3px;top:790.2px;width:15px;font-size:12px;line-height:14.4px;text-align:center;color:rgba(140,140,140,.2);transform:rotate(-20deg);transform-origin:7.5px 7px;pointer-events:none"><div>義</div><div>6</div><div>1</div><div>0</div><div>0</div></div>
<div class="a" style="left:1122.3px;top:790.2px;width:15px;font-size:12px;line-height:14.4px;text-align:center;color:rgba(140,140,140,.2);transform:rotate(-20deg);transform-origin:7.5px 7px;pointer-events:none"><div>義</div><div>6</div><div>1</div><div>0</div><div>0</div></div>
<div class="a" style="left:1422.3px;top:790.2px;width:15px;font-size:12px;line-height:14.4px;text-align:center;color:rgba(140,140,140,.2);transform:rotate(-20deg);transform-origin:7.5px 7px;pointer-events:none"><div>義</div><div>6</div><div>1</div><div>0</div><div>0</div></div>
<div class="a" style="left:1722.3px;top:790.2px;width:15px;font-size:12px;line-height:14.4px;text-align:center;color:rgba(140,140,140,.2);transform:rotate(-20deg);transform-origin:7.5px 7px;pointer-events:none"><div>義</div><div>6</div><div>1</div><div>0</div><div>0</div></div>
</body></html>
